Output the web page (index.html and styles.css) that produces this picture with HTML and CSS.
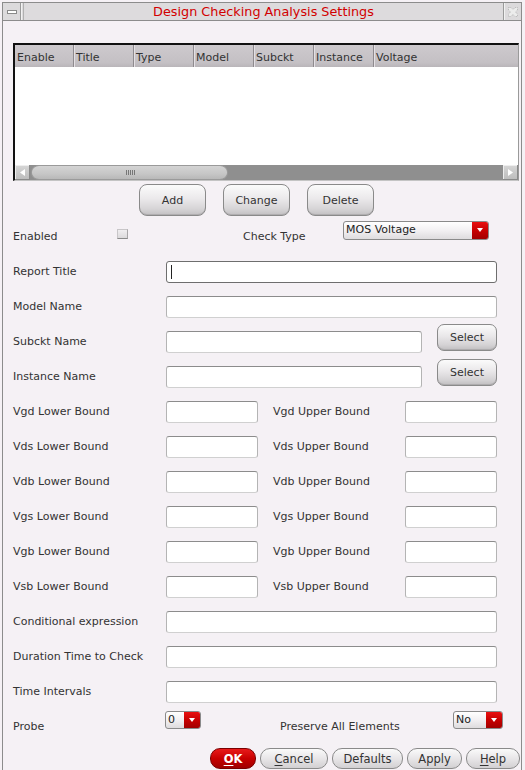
FILE: index.html
```html
<!DOCTYPE html>
<html>
<head>
<meta charset="utf-8">
<title>Design Checking Analysis Settings</title>
<link rel="stylesheet" href="styles.css">
</head>
<body>
<div class="window">
  <div class="titlebar">
    <div class="tb-btn tb-min"><span class="min-bar"></span></div>
    <div class="tb-title">Design Checking Analysis Settings</div>
    <div class="tb-btn tb-close">
      <svg width="12" height="12" viewBox="0 0 12 12"><path d="M1.5 1.5 L4 1.5 L6 3.5 L8 1.5 L10.5 1.5 L10.5 4 L8.5 6 L10.5 8 L10.5 10.5 L8 10.5 L6 8.5 L4 10.5 L1.5 10.5 L1.5 8 L3.5 6 L1.5 4 Z" fill="#ececec" stroke="#b4b4b4" stroke-width="1" stroke-dasharray="1 1"/></svg>
    </div>
  </div>
  <div class="content">
    <div class="table">
      <div class="thead">
        <div class="th">Enable</div>
        <div class="th">Title</div>
        <div class="th">Type</div>
        <div class="th">Model</div>
        <div class="th">Subckt</div>
        <div class="th">Instance</div>
        <div class="th">Voltage</div>
      </div>
      <div class="tbody"></div>
      <div class="hscroll">
        <div class="sb-btn"><svg width="9" height="9" viewBox="0 0 9 9"><path d="M2 4.5 L7 1 L7 8 Z" fill="#fff"/></svg></div>
        <div class="sb-track">
          <div class="sb-thumb"><span class="grip"></span></div>
        </div>
        <div class="sb-btn"><svg width="9" height="9" viewBox="0 0 9 9"><path d="M7 4.5 L2 1 L2 8 Z" fill="#fff"/></svg></div>
      </div>
    </div>

    <div class="list-actions">
      <button class="btn-big">Add</button>
      <button class="btn-big">Change</button>
      <button class="btn-big">Delete</button>
    </div>

    <div class="form">
      <div class="row row-enabled">
        <span class="lbl">Enabled</span>
        <span class="checkbox"></span>
        <span class="lbl">Check Type</span>
        <div class="combo combo-type"><span class="combo-text">MOS Voltage</span><span class="combo-arrow"></span></div>
      </div>
      <div class="row row-full">
        <span class="lbl">Report Title</span>
        <div class="field focused"><span class="caret"></span></div>
      </div>
      <div class="row row-full">
        <span class="lbl">Model Name</span>
        <div class="field"></div>
      </div>
      <div class="row row-select">
        <span class="lbl">Subckt Name</span>
        <div class="field"></div>
        <button class="btn-select">Select</button>
      </div>
      <div class="row row-select">
        <span class="lbl">Instance Name</span>
        <div class="field"></div>
        <button class="btn-select">Select</button>
      </div>
      <div class="row row-bound">
        <span class="lbl">Vgd Lower Bound</span><div class="field"></div>
        <span class="lbl">Vgd Upper Bound</span><div class="field"></div>
      </div>
      <div class="row row-bound">
        <span class="lbl">Vds Lower Bound</span><div class="field"></div>
        <span class="lbl">Vds Upper Bound</span><div class="field"></div>
      </div>
      <div class="row row-bound">
        <span class="lbl">Vdb Lower Bound</span><div class="field"></div>
        <span class="lbl">Vdb Upper Bound</span><div class="field"></div>
      </div>
      <div class="row row-bound">
        <span class="lbl">Vgs Lower Bound</span><div class="field"></div>
        <span class="lbl">Vgs Upper Bound</span><div class="field"></div>
      </div>
      <div class="row row-bound">
        <span class="lbl">Vgb Lower Bound</span><div class="field"></div>
        <span class="lbl">Vgb Upper Bound</span><div class="field"></div>
      </div>
      <div class="row row-bound">
        <span class="lbl">Vsb Lower Bound</span><div class="field"></div>
        <span class="lbl">Vsb Upper Bound</span><div class="field"></div>
      </div>
      <div class="row row-full">
        <span class="lbl">Conditional expression</span>
        <div class="field"></div>
      </div>
      <div class="row row-full">
        <span class="lbl">Duration Time to Check</span>
        <div class="field"></div>
      </div>
      <div class="row row-full">
        <span class="lbl">Time Intervals</span>
        <div class="field"></div>
      </div>
      <div class="row row-probe">
        <span class="lbl">Probe</span>
        <div class="combo combo-small combo-probe"><span class="combo-text">0</span><span class="combo-arrow"></span></div>
        <span class="lbl">Preserve All Elements</span>
        <div class="combo combo-small combo-no"><span class="combo-text">No</span><span class="combo-arrow"></span></div>
      </div>
    </div>

    <div class="footer">
      <button class="pill pill-ok"><u>O</u>K</button>
      <button class="pill pill-cancel"><u>C</u>ancel</button>
      <button class="pill pill-defaults">Defaults</button>
      <button class="pill pill-apply">Apply</button>
      <button class="pill pill-help"><u>H</u>elp</button>
    </div>
  </div>
</div>
</body>
</html>
```

FILE: styles.css
```css
html, body {
  margin: 0;
  padding: 0;
  background: #f5f1f5;
  font-family: "DejaVu Sans", sans-serif;
  font-size: 11px;
  color: #333;
}

.window {
  margin: 2px 0 0 2px;
  width: 518px;
  height: 768px;
  border: 1px solid #8c8c8c;
  border-bottom: none;
  background: #f5f1f5;
  overflow: hidden;
}

/* ---------- title bar ---------- */
.titlebar {
  display: flex;
  height: 17px;
  border-bottom: 1px solid #8c8c8c;
  background: #dddbdd;
}
.tb-btn {
  width: 17px;
  display: flex;
  align-items: center;
  justify-content: center;
  background: #dcdadc;
}
.tb-min {
  border-right: 1px solid #9a9a9a;
  box-shadow: 1px 0 0 #f2f2f2;
}
.tb-close {
  border-left: 1px solid #9a9a9a;
  box-shadow: inset 1px 0 0 #f2f2f2;
}
.min-bar {
  display: block;
  width: 8px;
  height: 2px;
  border: 1px solid #8a8a8a;
  background: #fff;
  margin-top: 1px;
}
.tb-title {
  flex: 1;
  text-align: center;
  color: #d20000;
  font-size: 12.8px;
  line-height: 17px;
  margin-left: 2px;
  border-left: 1px solid #b0b0b0;
}

/* ---------- content ---------- */
.content {
  padding: 22px 1px 0 10px;
}

/* ---------- table ---------- */
.table {
  width: 506px;
  height: 138px;
  box-sizing: border-box;
  border-top: 2px solid #111;
  border-left: 2px solid #111;
  border-right: 1px solid #9a9a9a;
  border-bottom: 1px solid #c4c4c4;
  display: flex;
  flex-direction: column;
  background: #fff;
}
.thead {
  height: 22px;
  display: grid;
  grid-template-columns: 58px repeat(5, 60px) 1fr;
  background: linear-gradient(#cdc9cd, #c4c0c4 80%, #b9b5b9);
}
.th {
  line-height: 22px;
  padding: 2px 0 0 2px;
  color: #333;
  white-space: nowrap;
  overflow: hidden;
}
.th + .th {
  border-left: 1px solid #8e8a8e;
  box-shadow: inset 1px 0 0 #e4e0e4;
}
.tbody {
  flex: 1;
  background: #fff;
}
.hscroll {
  height: 15px;
  display: flex;
  background: #8f8f8f;
}
.sb-btn {
  width: 15px;
  display: flex;
  align-items: center;
  justify-content: center;
  background: linear-gradient(#d6d6d6, #bcbcbc);
  box-shadow: inset -1px -1px 0 #8a8a8a, inset 1px 1px 0 #eee;
}
.sb-track {
  flex: 1;
  padding-left: 1px;
  display: flex;
}
.sb-thumb {
  width: 197px;
  height: 15px;
  box-sizing: border-box;
  border: 1px solid #9a9a9a;
  border-radius: 8px / 7px;
  background: linear-gradient(#d4d4d4, #c6c6c6 60%, #b8b8b8);
  display: flex;
  align-items: center;
  justify-content: center;
}
.grip {
  width: 9px;
  height: 5px;
  margin-left: 2px;
  background: repeating-linear-gradient(90deg, #777 0 1px, transparent 1px 2px);
}

/* ---------- list buttons ---------- */
.list-actions {
  margin-top: 3px;
  height: 32px;
  padding-left: 126px;
  display: flex;
  gap: 17px;
}
button {
  font-family: "DejaVu Sans", sans-serif;
  font-size: 11px;
  color: #333;
  padding: 0;
  cursor: default;
}
.btn-big {
  width: 67px;
  height: 32px;
  border: 1px solid #8a8a8a;
  border-radius: 8px;
  background: linear-gradient(#fbfbfb, #ebe9eb 45%, #d6d4d6 80%, #c2c0c2);
  box-shadow: inset 0 -1px 0 #b0aeb0;
}

/* ---------- form ---------- */
.form {
  margin-top: 3px;
  display: flex;
  flex-direction: column;
}
.row {
  height: 35px;
  display: grid;
  align-items: center;
}
.lbl {
  color: #333;
  white-space: nowrap;
  line-height: 13px;
}
.row-full   { grid-template-columns: 153px 331px; }
.row-select { grid-template-columns: 153px 271px 60px; }
.row-bound  { grid-template-columns: 153px 107px 132px 92px; }
.row-enabled { grid-template-columns: 104px 126px 100px 146px; }
.row-probe  { grid-template-columns: 152px 115px 173px 50px; }

.field {
  height: 22px;
  box-sizing: border-box;
  background: #fff;
  border: 1px solid #d0d0d0;
  border-top-color: #8c8c8c;
  border-left-color: #b4b4b4;
  border-right-color: #b4b4b4;
  border-radius: 3px;
  position: relative;
}
.row-select .field { width: 256px; }
.row-bound .field { width: 92px; }
.field.focused {
  border: 1px solid #6e6e6e;
}
.caret {
  position: absolute;
  left: 4px;
  top: 3px;
  width: 1px;
  height: 14px;
  background: #222;
}

.btn-select {
  align-self: start;
  width: 60px;
  height: 27px;
  margin-top: 0;
  border: 1px solid #8a8a8a;
  border-radius: 7px;
  background: linear-gradient(#fbfbfb, #e9e7e9 45%, #d4d2d4 80%, #c0bec0);
  box-shadow: inset 0 -1px 0 #aeacae;
}

.checkbox {
  align-self: start;
  margin-top: 10px;
  width: 11px;
  height: 10px;
  box-sizing: border-box;
  background: linear-gradient(#f0eef0, #dcdadc);
  border: 1px solid #c8c6c8;
  border-bottom-color: #8a8a8a;
  border-right-color: #a8a6a8;
}

.combo {
  display: flex;
  box-sizing: border-box;
  border: 1px solid #8a8a8a;
  border-radius: 3px;
  overflow: hidden;
  background: linear-gradient(#ffffff, #f2f0f2 50%, #dedcde);
}
.combo-type {
  align-self: start;
  margin-top: 2px;
  width: 146px;
  height: 19px;
}
.combo-small {
  align-self: start;
  margin-top: 2px;
  height: 18px;
}
.combo-probe { width: 36px; }
.combo-no { width: 50px; }
.combo-text {
  flex: 1;
  padding-left: 2px;
  line-height: 16px;
  color: #222;
  white-space: nowrap;
  overflow: hidden;
}
.combo-arrow {
  width: 16px;
  background: linear-gradient(#e81010, #c40000 55%, #a20000);
  position: relative;
}
.combo-arrow::after {
  content: "";
  position: absolute;
  left: 5px;
  top: 6px;
  border-left: 3px solid transparent;
  border-right: 3px solid transparent;
  border-top: 4px solid #fff;
}

/* ---------- footer ---------- */
.footer {
  margin-top: 4px;
  height: 21px;
  display: flex;
  justify-content: flex-end;
  gap: 4px;
}
.pill {
  height: 21px;
  border: 1px solid #8a8a8a;
  border-radius: 10px;
  background: linear-gradient(#fafafa, #e8e6e8 50%, #d2d0d2);
  color: #333;
  font-size: 11.5px;
}
.pill u { text-decoration-thickness: 1px; text-underline-offset: 2px; }
.pill-ok {
  width: 46px;
  background: linear-gradient(#e81a1a, #c80000 50%, #a00000);
  border-color: #7a0000;
  color: #fff;
  font-weight: bold;
}
.pill-cancel { width: 68px; }
.pill-defaults { width: 71px; }
.pill-apply { width: 55px; }
.pill-help { width: 54px; }
```
